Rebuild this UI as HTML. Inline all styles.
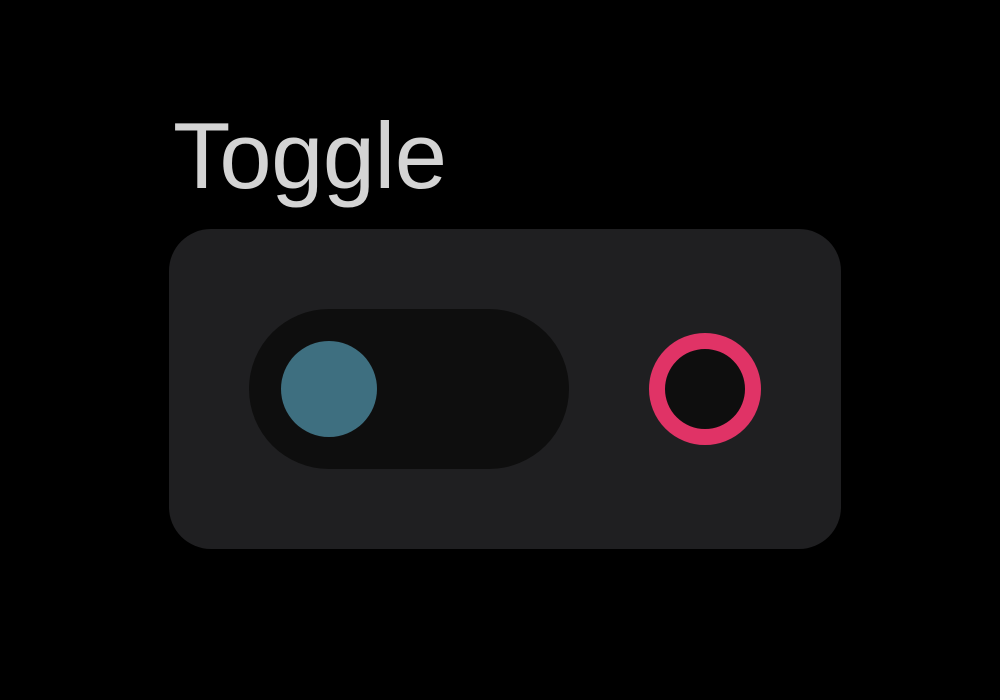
<!DOCTYPE html>
<html><head><style>
html,body{margin:0;padding:0;background:#000;width:1000px;height:700px;overflow:hidden}
.t{position:absolute;left:173px;top:101px;font-family:"Liberation Sans",sans-serif;font-size:94px;line-height:110px;color:#d4d4d4;letter-spacing:-0.6px}
.card{position:absolute;left:169px;top:229px;width:672px;height:320px;border-radius:42px;background:#1f1f21}
.track{position:absolute;left:249px;top:309px;width:320px;height:160px;border-radius:80px;background:#0e0e0e}
.knob{position:absolute;left:281px;top:341px;width:96px;height:96px;border-radius:50%;background:#3e6f80}
.ring{position:absolute;left:649px;top:333px;width:80px;height:80px;border-radius:50%;border:16px solid #e03366;background:#0e0e0e}
</style></head><body>
<div class="t">Toggle</div>
<div class="card"></div>
<div class="track"></div>
<div class="knob"></div>
<div class="ring"></div>
</body></html>
